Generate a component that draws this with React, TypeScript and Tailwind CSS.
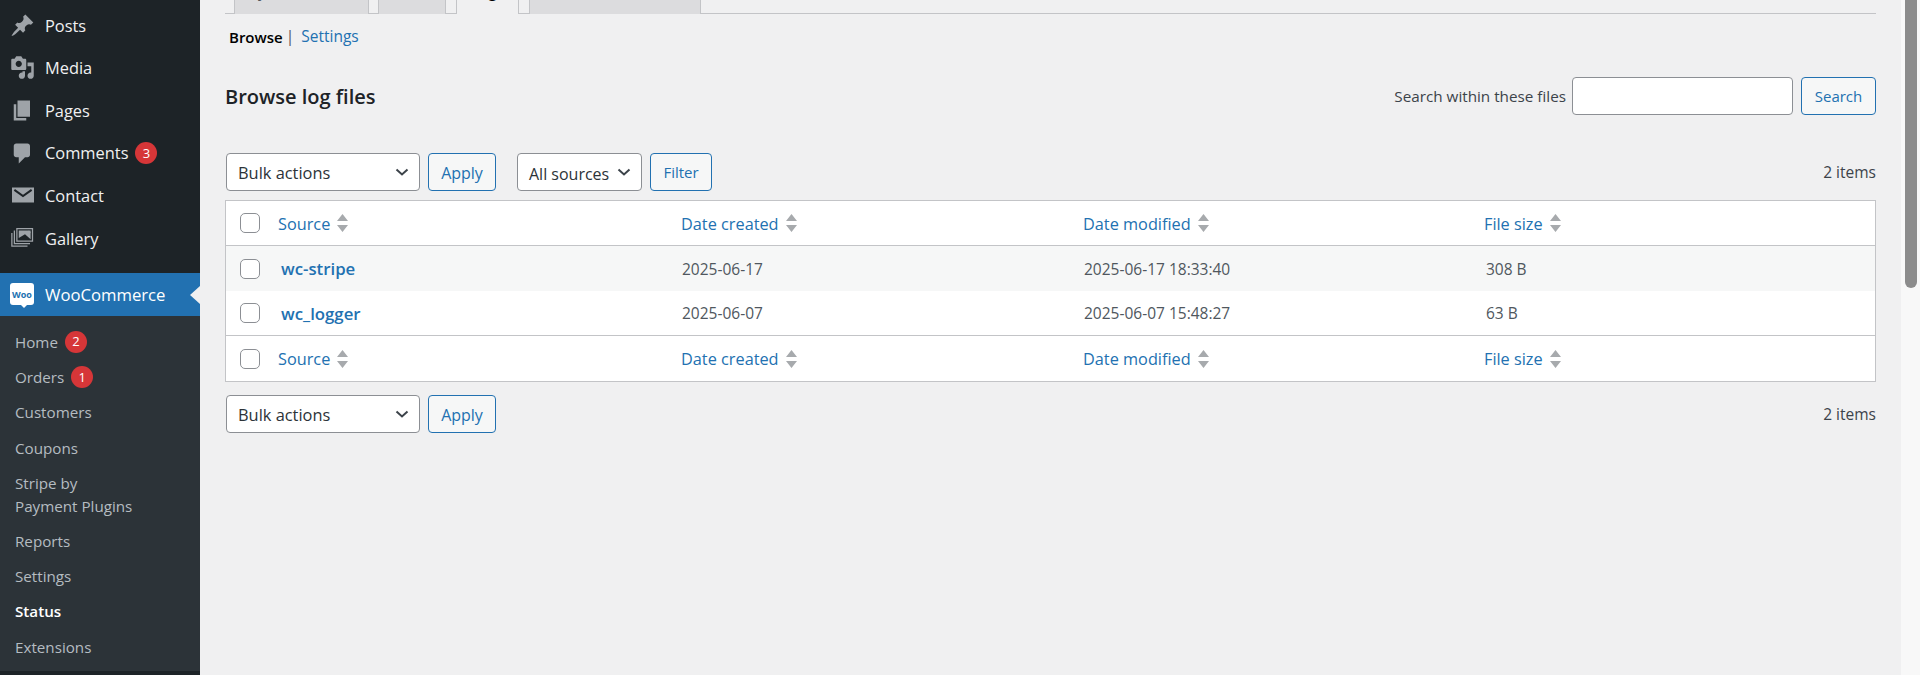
import type { ReactNode } from 'react'

const font = { fontFamily: '"Open Sans", sans-serif' }

const icons: Record<string, ReactNode> = {
  posts: (
    <path d="M10.44 3.02l1.82-1.82 6.36 6.35-1.83 1.82c-1.05-.68-2.48-.57-3.41.36l-.75.75c-.92.93-1.04 2.35-.35 3.41l-1.83 1.82-2.41-2.41-2.8 2.79c-.42.42-3.38 2.71-3.8 2.29s1.86-3.39 2.28-3.81l2.79-2.79L4.1 9.36l1.83-1.82c1.05.69 2.48.57 3.4-.36l.75-.75c.93-.92 1.05-2.35.36-3.41z" />
  ),
  media: (
    <path d="M13 11V4c0-.55-.45-1-1-1h-1.67L9 1H5L3.67 3H2c-.55 0-1 .45-1 1v7c0 .55.45 1 1 1h10c.55 0 1-.45 1-1zM7 4.5c1.38 0 2.5 1.12 2.5 2.5S8.38 9.5 7 9.5 4.5 8.38 4.5 7 5.62 4.5 7 4.5zM14 6h5v10.5c0 1.38-1.12 2.5-2.5 2.5S14 17.88 14 16.5s1.12-2.5 2.5-2.5c.17 0 .34.02.5.05V9h-3V6zm-4 8.05V13h2v3.5c0 1.38-1.12 2.5-2.5 2.5S7 17.88 7 16.5 8.12 14 9.5 14c.17 0 .34.02.5.05z" />
  ),
  pages: <path d="M6 15V2h10v13H6zm-1 1h8v2H3V5h2v11z" />,
  comments: (
    <path d="M5 2h9c1.1 0 2 .9 2 2v7c0 1.1-.9 2-2 2h-2l-5 5v-5H5c-1.1 0-2-.9-2-2V4c0-1.1.9-2 2-2z" />
  ),
  contact: (
    <>
      <rect x="1.600" y="3.600" width="17.600" height="12" />
      <path d="M3.500 5.500l6.900 5 6.900-5" fill="none" stroke="#1d2327" strokeWidth="1.600" />
    </>
  ),
  gallery: (
    <>
      <path
        fillRule="evenodd"
        d="M5 1.500h13.500v11H5zM6 2.500v9h11.500v-9zM7 3.500h9.500v7L12 6.500 7 9.500z"
      />
      <circle cx="15" cy="5" r="1.300" />
      <path d="M3 3.500h1v10h12v1H3zM1 5.500h1v10h12v1H1z" />
    </>
  ),
}

const topItems = [
  { label: 'Posts', icon: 'posts' },
  { label: 'Media', icon: 'media' },
  { label: 'Pages', icon: 'pages' },
  { label: 'Comments', icon: 'comments', badge: '3' },
  { label: 'Contact', icon: 'contact' },
  { label: 'Gallery', icon: 'gallery' },
]

function Badge({ count }: { count: string }) {
  return (
    <span className="ml-[7px] flex h-[22px] w-[22px] items-center justify-center rounded-full bg-[#d63638] text-[13px] text-white">
      {count}
    </span>
  )
}

function Sidebar() {
  return (
    <aside className="flex w-[200px] shrink-0 flex-col bg-[#1d2327] pt-[4px] text-[16.4px] text-[#f0f0f1]">
      {topItems.map((item) => (
        <div key={item.label} className="flex h-[42.67px] items-center">
          <svg viewBox="0 0 20 20" className="ml-[10px] mr-[10px] h-[25px] w-[25px] fill-[#9ea3a8]">
            {icons[item.icon]}
          </svg>
          <span className="pt-px">{item.label}</span>
          {item.badge && <Badge count={item.badge} />}
        </div>
      ))}

      <div className="relative mt-[13px] flex h-[43px] items-center bg-[#2271b1] text-[16.7px] text-white">
        <div className="relative ml-[10px] mr-[11px] flex h-[22px] w-[24px] items-center justify-center rounded-[3px] bg-white text-[9px] font-bold text-[#2271b1]">
          Woo
          <span className="absolute -bottom-[3px] left-[11px] h-0 w-0 border-l-[3px] border-r-[3px] border-t-[3px] border-l-transparent border-r-transparent border-t-white" />
        </div>
        <span className="pt-px">WooCommerce</span>
        <span className="absolute right-0 top-[13px] h-0 w-0 border-y-[9px] border-r-[10px] border-y-transparent border-r-[#f0f0f1]" />
      </div>

      <div className="bg-[#2c3338] pb-[6px] pt-[8.5px] text-[15.2px] text-[#b5bcc1]">
        <SubItem label="Home" badge="2" />
        <SubItem label="Orders" badge="1" />
        <SubItem label="Customers" />
        <SubItem label="Coupons" />
        <div className="px-[15px] py-[6px] leading-[23px]">
          Stripe by
          <br />
          Payment Plugins
        </div>
        <SubItem label="Reports" />
        <SubItem label="Settings" />
        <SubItem label="Status" active />
        <SubItem label="Extensions" />
      </div>
    </aside>
  )
}

function SubItem({ label, badge, active }: { label: string; badge?: string; active?: boolean }) {
  return (
    <div className={`flex h-[35.3px] items-center px-[15px] ${active ? 'font-semibold text-white' : ''}`}>
      {label}
      {badge && <Badge count={badge} />}
    </div>
  )
}

function Tabs() {
  const tabs = [
    { label: 'System status', w: 'w-[135px]', ml: 'ml-[9px]' },
    { label: 'Tools', w: 'w-[68px]', ml: 'ml-[9px]' },
    { label: 'Logs', w: 'w-[63px]', ml: 'ml-[10px]', active: true },
    { label: 'Scheduled Actions', w: 'w-[172px]', ml: 'ml-[10px]' },
  ]
  return (
    <div className="flex h-[14px] border-b border-[#c3c4c7]">
      {tabs.map((t) => (
        <div
          key={t.label}
          className={`${t.w} ${t.ml} relative flex h-[14px] items-end justify-center overflow-hidden border-x text-[15.5px] font-semibold ${
            t.active ? 'border-[#c3c4c7] bg-[#f0f0f1] text-black' : 'border-[#c3c4c7] bg-[#dcdcde] text-[#50575e]'
          }`}
        >
          <span className="mb-[13px] whitespace-nowrap leading-[20px]">{t.label}</span>
        </div>
      ))}
    </div>
  )
}

function Chevron() {
  return (
    <svg viewBox="0 0 16 16" className="h-[16px] w-[16px] fill-none stroke-[#3c434a] stroke-2">
      <path d="M2.500 5.500L8 10.500l5.500-5" />
    </svg>
  )
}

function Select({ label, width, size }: { label: string; width: string; size: string }) {
  return (
    <div className={`${width} ${size} flex h-[38px] items-center justify-between rounded-[4px] border border-[#8c8f94] bg-white pl-[11px] pr-[9px] text-[#2c3338]`}>
      <span className="whitespace-nowrap pt-[3px]">{label}</span>
      <Chevron />
    </div>
  )
}

function Button({ label, width, size }: { label: string; width: string; size: string }) {
  return (
    <button className={`${width} ${size} h-[38px] rounded-[4px] border border-[#2271b1] bg-[#f6f7f7] pt-px text-[#2271b1]`}>
      {label}
    </button>
  )
}

function Checkbox() {
  return <span className="h-[20px] w-[20px] shrink-0 rounded-[5px] border border-[#8c8f94] bg-white" />
}

function SortArrows() {
  return (
    <svg viewBox="0 0 10 18" className="ml-[7px] h-[18px] w-[11px] fill-[#a7aaad]" preserveAspectRatio="none">
      <path d="M5 0l5 7H0zM0 11h10l-5 7z" />
    </svg>
  )
}

function Row({ cells, className = '' }: { cells: ReactNode[]; className?: string }) {
  return (
    <div className={`flex items-center ${className}`}>
      <div className="flex w-[52px] shrink-0 pl-[14px]">
        <Checkbox />
      </div>
      <div className="w-[403px] shrink-0">{cells[0]}</div>
      <div className="w-[402px] shrink-0">{cells[1]}</div>
      <div className="w-[401px] shrink-0">{cells[2]}</div>
      <div>{cells[3]}</div>
    </div>
  )
}

function Heading({ label }: { label: string }) {
  return (
    <span className="flex items-center text-[16.3px] text-[#2271b1]">
      <span className="pt-[2px]">{label}</span>
      <SortArrows />
    </span>
  )
}

const headCells = [
  <Heading key="s" label="Source" />,
  <Heading key="c" label="Date created" />,
  <Heading key="m" label="Date modified" />,
  <Heading key="f" label="File size" />,
]

function FileRow({ name, created, modified, size, className }: { name: string; created: string; modified: string; size: string; className: string }) {
  return (
    <Row
      className={className}
      cells={[
        <span key="s" className="block pl-[3px] pt-px text-[16.8px] font-semibold text-[#2271b1]">{name}</span>,
        <span key="c" className="block pl-px pt-[2px] text-[15.5px] text-[#50575e]">{created}</span>,
        <span key="m" className="block pl-px pt-[2px] text-[15.5px] text-[#50575e]">{modified}</span>,
        <span key="f" className="block pl-[2px] pt-[2px] text-[15.5px] text-[#50575e]">{size}</span>,
      ]}
    />
  )
}

export default function App() {
  return (
    <div style={font} className="flex h-[675px] w-[1920px] overflow-hidden bg-[#f0f0f1] text-[15.5px] text-[#3c434a]">
      <Sidebar />

      <main className="min-w-0 flex-1 px-[25px]">
        <Tabs />

        <div className="mt-[12px] flex h-[22px] items-center pl-[4px]">
          <span className="text-[15px] font-semibold text-black">Browse</span>
          <span className="ml-[3px] mr-[7px] text-[#50575e]">|</span>
          <span className="text-[#2271b1]">Settings</span>
        </div>

        <div className="mt-[29px] flex h-[38px] items-center">
          <h2 className="pt-px text-[20px] font-semibold text-[#1d2327]">Browse log files</h2>
          <label className="ml-auto mr-[6px] pt-px text-[15.25px]">Search within these files</label>
          <div className="h-[38px] w-[221px] rounded-[4px] border border-[#8c8f94] bg-white" />
          <div className="ml-[8px]">
            <Button label="Search" width="w-[75px]" size="text-[15px]" />
          </div>
        </div>

        <div className="mt-[38px] flex items-center pl-px">
          <Select label="Bulk actions" width="w-[194px]" size="text-[16.4px]" />
          <div className="ml-[8px]">
            <Button label="Apply" width="w-[68px]" size="text-[16px]" />
          </div>
          <div className="ml-[21px]">
            <Select label="All sources" width="w-[125px]" size="text-[16px]" />
          </div>
          <div className="ml-[8px]">
            <Button label="Filter" width="w-[62px]" size="text-[15px]" />
          </div>
          <span className="ml-auto pt-[2px] text-[15.5px]">2 items</span>
        </div>

        <div className="mt-[9px] border border-[#c3c4c7] bg-white">
          <Row className="h-[45px] border-b border-[#c3c4c7]" cells={headCells} />
          <FileRow className="h-[45px] bg-[#f6f7f7]" name="wc-stripe" created="2025-06-17" modified="2025-06-17 18:33:40" size="308 B" />
          <FileRow className="h-[44px]" name="wc_logger" created="2025-06-07" modified="2025-06-07 15:48:27" size="63 B" />
          <Row className="h-[46px] border-t border-[#c3c4c7]" cells={headCells} />
        </div>

        <div className="mt-[13px] flex items-center pl-px">
          <Select label="Bulk actions" width="w-[194px]" size="text-[16.4px]" />
          <div className="ml-[8px]">
            <Button label="Apply" width="w-[68px]" size="text-[16px]" />
          </div>
          <span className="ml-auto pt-[2px] text-[15.5px]">2 items</span>
        </div>
      </main>

      <div className="w-[19px] shrink-0 bg-[#f8f8f8] pl-[4px] pr-[3px]">
        <div className="h-[288px] rounded-b-[6px] bg-[#8c8c8c]" />
      </div>
    </div>
  )
}
